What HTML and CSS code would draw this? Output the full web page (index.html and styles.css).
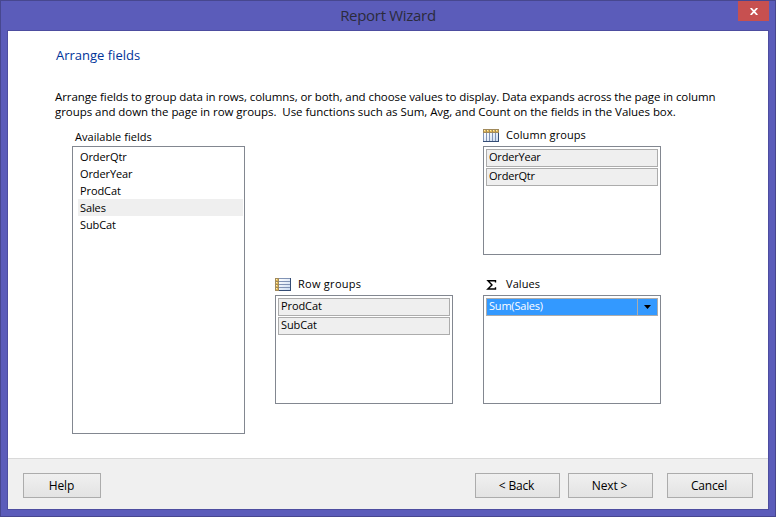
FILE: index.html
```html
<!DOCTYPE html>
<html lang="en">
<head>
<meta charset="utf-8">
<title>Report Wizard</title>
<link rel="stylesheet" href="styles.css">
</head>
<body>
<div class="window">
  <header class="titlebar">
    <h1 class="title"><span>Report Wizard</span></h1>
    <button class="close" aria-label="Close"><svg width="8" height="7" viewBox="0 0 8 7"><path d="M.7 0L7.3 7M7.3 0L.7 7" stroke="#fff" stroke-width="1.8"/></svg></button>
  </header>
  <main class="client">
    <section class="page">
      <h2 class="heading"><span>Arrange fields</span></h2>
      <p class="intro"><span class="line1">Arrange fields to group data in rows, columns, or both, and choose values to display. Data expands across the page in column</span><br><span class="line2">groups and down the page in row groups.&nbsp; Use functions such as Sum, Avg, and Count on the fields in the Values box.</span></p>
      <div class="fields">
        <div class="available">
          <div class="label"><span>Available fields</span></div>
          <ul class="list">
            <li><span>OrderQtr</span></li>
            <li><span>OrderYear</span></li>
            <li><span>ProdCat</span></li>
            <li class="current"><span>Sales</span></li>
            <li><span>SubCat</span></li>
          </ul>
        </div>
        <div class="group columns">
          <div class="group-label">
            <svg width="16" height="13" viewBox="0 0 16 13" shape-rendering="crispEdges">
              <defs><linearGradient id="cg" x2="1" y2="1"><stop offset="0" stop-color="#fff"/><stop offset="1" stop-color="#cbdcf2"/></linearGradient></defs>
              <path fill="#8193b5" d="M0 4h16v9H0z"/><path fill="url(#cg)" d="M1 4h2v8H1zM4 4h2v8H4zM7 4h2v8H7zM10 4h2v8h-2zM13 4h2v8h-2z"/>
              <path fill="#a18a5c" d="M0 0h16v4H0z"/><path fill="#e3b957" d="M1 1h2v2H1zM4 1h2v2H4zM7 1h2v2H7zM10 1h2v2h-2zM13 1h2v2h-2z"/><path fill="#fff0b3" d="M1 1h1v1H1zM4 1h1v1H4zM7 1h1v1H7zM10 1h1v1h-1zM13 1h1v1h-1z"/>
              <path fill="#344c75" d="M15 4h1v9H0v-1h15z"/>
            </svg>
            <span>Column groups</span>
          </div>
          <div class="box"><div class="chip"><span>OrderYear</span></div><div class="chip"><span>OrderQtr</span></div></div>
        </div>
        <div class="group rows">
          <div class="group-label">
            <svg width="16" height="13" viewBox="0 0 16 13" shape-rendering="crispEdges">
              <defs><linearGradient id="rg" x2="1" y2="1"><stop offset="0" stop-color="#fff"/><stop offset="1" stop-color="#cbdcf2"/></linearGradient></defs>
              <path fill="#8193b5" d="M4 0h12v13H4z"/><path fill="url(#rg)" d="M4 1h11v2H4zM4 4h11v2H4zM4 7h11v2H4zM4 10h11v2H4z"/>
              <path fill="#a18a5c" d="M0 0h4v13H0z"/><path fill="#e3b957" d="M1 1h2v2H1zM1 4h2v2H1zM1 7h2v2H1zM1 10h2v2H1z"/><path fill="#fff0b3" d="M1 1h1v1H1zM1 4h1v1H1zM1 7h1v1H1zM1 10h1v1H1z"/>
              <path fill="#344c75" d="M15 0h1v13H4v-1h11z"/>
            </svg>
            <span>Row groups</span>
          </div>
          <div class="box"><div class="chip"><span>ProdCat</span></div><div class="chip"><span>SubCat</span></div></div>
        </div>
        <div class="group values">
          <div class="group-label">
            <svg width="16" height="13" viewBox="0 0 16 13"><path d="M12.5 4.5V2.8H5L9 6.9 4.8 11h7.7V9.3" fill="none" stroke="#000" stroke-width="1.4"/></svg>
            <span>Values</span>
          </div>
          <div class="box"><div class="chip selected"><span>Sum(Sales)</span><i class="drop"><svg width="8" height="4" viewBox="0 0 8 4"><path d="M0 0h7L3.5 4z"/></svg></i></div></div>
        </div>
      </div>
    </section>
    <footer class="footer">
      <button class="btn help">Help</button>
      <button class="btn back">&lt; Back</button>
      <button class="btn next">Next &gt;</button>
      <button class="btn cancel">Cancel</button>
    </footer>
  </main>
</div>
</body>
</html>
```
FILE: styles.css
```css
* { box-sizing: border-box; }
body { margin: 0; font: 11px/15px "Open Sans", "Noto Sans", sans-serif; color: #000; }
h1, h2, p, ul { margin: 0; padding: 0; font-weight: 400; }
svg { display: block; flex: none; }
button { font: inherit; color: inherit; padding: 0; border-radius: 0; }
.window { width: 776px; height: 517px; padding: 0 6px 6px; background: #5b5cba; border: 1px solid #47478f; display: flex; flex-direction: column; }
.titlebar { height: 29px; flex: none; display: grid; grid-template-columns: 31px 1fr 31px; align-items: start; }
.title { grid-column: 2; text-align: center; font-size: 15px; letter-spacing: -.3px; line-height: 29px; color: #2b2b3c; }
.close { width: 31px; height: 20px; border: 0; background: #c75050; display: grid; place-items: center; }
.client { flex: 1; border: 1px solid #4d4da0; background: #fff; display: flex; flex-direction: column; }
.page { flex: 1; padding: 14px 0 0 47px; }
.heading { font-size: 13px; line-height: 20px; color: #003399; padding-left: 1px; }
.intro { margin-top: 24px; font-size: 11.5px; white-space: nowrap; }
.line1 { letter-spacing: -.09px; }
.line2 { letter-spacing: -.05px; }
.fields { margin: 10px 0 0 17px; display: grid; grid-template-columns: 173px 178px 178px; column-gap: 30px; grid-template-rows: 126px 1fr; row-gap: 23px; }
.available { grid-row: 1 / 3; }
.label { height: 17px; padding: 0 0 0 3px; line-height: 15px; letter-spacing: .04px; }
.list { height: 288px; border: 1px solid #828790; list-style: none; padding: 1px 1px 0 5px; }
.list li { height: 17px; line-height: 17px; padding-left: 2px; letter-spacing: -.1px; }
.list .current { background: #efefef; }
.group { display: flex; flex-direction: column; }
.columns { grid-area: 1 / 3; }
.rows { grid-area: 2 / 2; }
.values { grid-area: 2 / 3; }
.group-label { height: 17px; padding-bottom: 4px; display: flex; align-items: center; gap: 7px; letter-spacing: .1px; }
.group-label span { padding-bottom: 2px; }
.rows .group-label { letter-spacing: .27px; }
.box { height: 109px; border: 1px solid #828790; padding: 2px; display: flex; flex-direction: column; gap: 1px; }
.chip { height: 18px; border: 1px solid #acacac; background: #efefef; line-height: 14px; padding-left: 2px; display: flex; justify-content: space-between; letter-spacing: -.2px; }
.rows .chip { letter-spacing: -.1px; }
.chip.selected { background: #3399ff; color: #fff; }
.drop { width: 20px; border-left: 1px solid #acacac; display: grid; place-items: center; }
.footer { height: 51px; border-top: 1px solid #d9d9d9; background: #f0f0f0; padding: 14px 15px 0; display: flex; }
.btn { height: 25px; border: 1px solid #acacac; background: linear-gradient(#f0f0f0, #e3e3e3); font-size: 12px; line-height: 22px; letter-spacing: -.15px; }
.help { width: 78px; margin-right: auto; padding-right: 1px; }
.back, .next { width: 85px; padding-right: 2px; }
.next { margin: 0 14px 0 8px; }
.cancel { width: 86px; padding-right: 2px; }
```
